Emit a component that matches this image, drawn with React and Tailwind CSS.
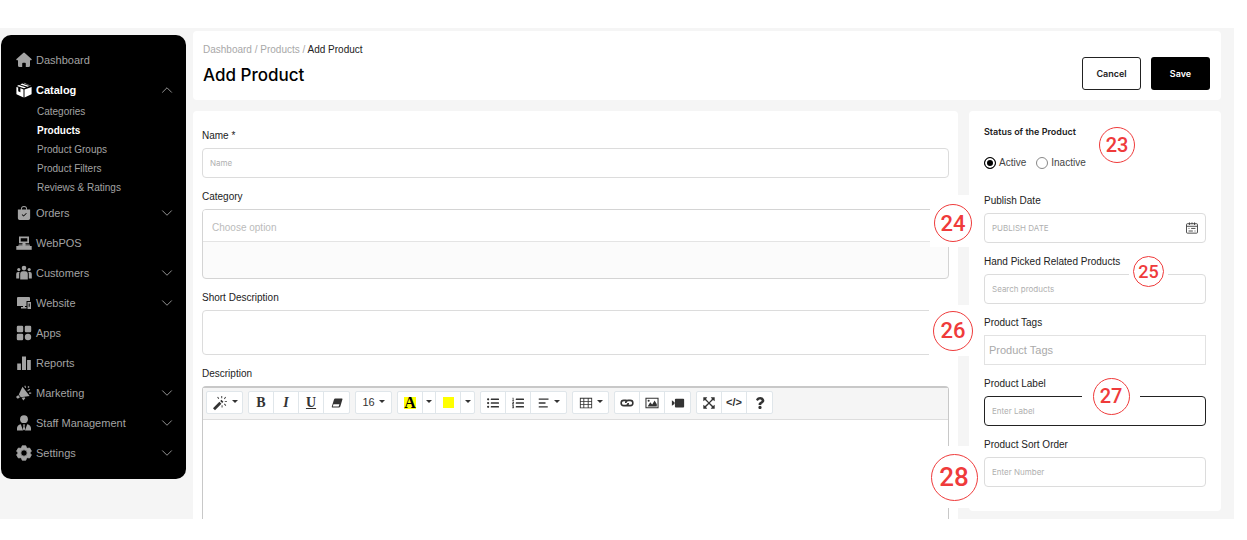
import React, { useState } from 'react';
import { BsBagCheckFill } from 'react-icons/bs';
import { FaListUl, FaListOl, FaQuestion } from 'react-icons/fa';
import { ChevronDown, ChevronUp } from 'lucide-react';

const Svg = ({ children, className = 'size-4', box = '0 0 16 16' }) => (
  <svg className={className} viewBox={box} fill="currentColor" aria-hidden="true">
    {children}
  </svg>
);

const HomeIcon = () => (
  <Svg>
    <path d="M7.200.9a1.200 1.200 0 0 1 1.600 0l6.700 6.200c.5.500.3 1.200-.4 1.200H14v5.200a1.500 1.500 0 0 1-1.500 1.500H9.800v-3.500a.8.8 0 0 0-.8-.8H7a.8.8 0 0 0-.8.8V15H3.500A1.500 1.500 0 0 1 2 13.500V8.300H.9c-.7 0-.9-.7-.4-1.200z" />
  </Svg>
);

const BoxIcon = () => (
  <Svg>
    <path d="M8.500 7.400 15.600 5v6.700c0 .4-.2.700-.6.900l-6.500 2.900zM.4 5l1.800.6v3.600l2.200 1V6.300l3.100 1.100v8.100L1 12.600a1 1 0 0 1-.6-.9zM.9 3.900l2-.9 7.200 2.500L8 6.300zM4.300 2.400l1.800-.8L13.200 4l-1.700.8zM7.500 1 8 .8l7.100 3.100-.5.100z" />
  </Svg>
);

const PosIcon = () => (
  <Svg>
    <path fillRule="evenodd" d="M3 1.500h10v6.700H9.500v1.300h4l.7 1.300h-12l.7-1.300h3.600V8.200H3zM4.700 3.200v3.300h6.600V3.200z" />
    <path d="M.3 11h15.400v3.800H.3z" />
    <path d="M6.500 9.500h3v2h-3z" />
  </Svg>
);

const PeopleIcon = () => (
  <Svg>
    <circle cx="8" cy="3.100" r="2.300" />
    <circle cx="2.800" cy="4.600" r="1.600" />
    <circle cx="13.200" cy="4.600" r="1.600" />
    <path d="M4.200 14.500V9a2.700 2.700 0 0 1 2.700-2.700h2.200A2.700 2.700 0 0 1 11.800 9v5.500zM.2 13.500V8.900A1.900 1.900 0 0 1 2 7h1.700c-.4.600-.5 1.200-.5 2v4.500zM15.800 13.500V8.900A1.900 1.900 0 0 0 14 7h-1.700c.4.600.5 1.200.5 2v4.500z" />
  </Svg>
);

const DevicesIcon = () => (
  <Svg>
    <path d="M2 2h11a1 1 0 0 1 1 1v3h-3.500v5H1V3a1 1 0 0 1 1-1zM5 12h5.500v1.500H5z" />
    <path fillRule="evenodd" d="M11.500 7H15v7h-3.500zM12.700 8.500v3.200h1V8.500z" />
    <path d="M7 10.500h2v2H7z" />
  </Svg>
);

const AppsIcon = () => (
  <Svg>
    <rect x=".8" y=".8" width="6.400" height="6.400" rx="1.200" />
    <rect x="8.800" y=".8" width="6.400" height="6.400" rx="1.200" />
    <rect x=".8" y="8.800" width="6.400" height="6.400" rx="1.200" />
    <circle cx="12" cy="12" r="3.200" />
  </Svg>
);

const BarsIcon = () => (
  <Svg>
    <path d="M1.200 8.500h3.700V15H1.200zM6 1.500h4V15H6zM11.100 5h3.700v10h-3.700z" />
  </Svg>
);

const MegaphoneIcon = () => (
  <Svg>
    <path d="M6.500 1.800 13.600 11 4.800 12.200 2.800 9.600zM2.500 10.200l1.500 2-1.400 1.100a1.300 1.300 0 0 1-1.800-.3l-.2-.2a1.300 1.300 0 0 1 .3-1.800zM5.600 12.700l2.900-.5.800 1.100-2 2.100z" />
    <path d="m8.300 1 .9-.6 1 2-1 .5zM11.500 2.100l1-1 1 1-1 1zM11.400 4.900l2.300-.9.500 1.100-2.300.9zM13 7.500h2.200v1.200H13z" />
  </Svg>
);

const StaffIcon = () => (
  <Svg>
    <circle cx="8" cy="4.200" r="3.900" />
    <path d="M1 15.500v-2.200c0-2.100 1.300-3.500 3.800-4.100l2.200 6.300zM15 15.500v-2.200c0-2.100-1.300-3.500-3.800-4.100L9 15.500zM6.900 9.400h2.200L8.500 11l.7 3.200L8 15.500l-1.200-1.300.7-3.200z" />
  </Svg>
);

const GearIcon = () => (
  <Svg>
    <path
      fillRule="evenodd"
      d="M6.200.8h3.600l.7 1.900 1.100.6 2-.3 1.800 3.100-1.200 1.500v.8l1.200 1.500-1.800 3.100-2-.3-1.100.6-.7 1.900H6.200l-.7-1.900-1.100-.6-2 .3L.6 9.900l1.200-1.500v-.8L.6 6.100 2.400 3l2 .3 1.100-.6zM8 4.800a3.200 3.200 0 1 0 0 6.400 3.200 3.200 0 0 0 0-6.400z"
      stroke="currentColor"
      strokeWidth=".8"
      strokeLinejoin="round"
    />
  </Svg>
);

const WandIcon = () => (
  <Svg>
    <path d="M1 13.200 7.400 6.800l2 2L3 15.200zM8.200 6l1.200-1.200 2 2L10.200 8z" />
    <path d="M5.200 2.200 6 1.700l1.200 1.900-.8.500zM9.300 1h.9v2.200h-.9zM13.200 1.800l.8.500-1.300 1.900-.7-.5zM12.800 5.900H15v.9h-2.200zM12 9.200l.7-.6 1.500 1.700-.7.600zM9.600 10.200h.9v2.200h-.9z" />
  </Svg>
);

const EraserIcon = () => (
  <Svg className="size-3">
    <path fillRule="evenodd" d="M6 2h8.500a.8.800 0 0 1 .8 1l-2.900 9.500A2 2 0 0 1 10.500 14H1.800a.8.800 0 0 1-.8-1l2.900-9.500A2 2 0 0 1 6 2zM3.300 9.500 2.400 12.700h7.800l1-3.200z" />
  </Svg>
);

const AlignIcon = () => (
  <Svg className="size-3">
    <path d="M1 2h13v1.800H1zM1 7.100h9v1.800H1zM1 12.200h12V14H1z" />
  </Svg>
);

const TableIcon = () => (
  <Svg className="size-3.5">
    <path fillRule="evenodd" d="M1 2h14v12H1zM2 3v2.700h3V3zM6 3v2.700h4V3zM11 3v2.700h3V3zM2 6.700v2.600h3V6.700zM6 6.700v2.600h4V6.700zM11 6.700v2.600h3V6.700zM2 10.300V13h3v-2.700zM6 10.300V13h4v-2.700zM11 10.300V13h3v-2.700z" />
  </Svg>
);

const LinkIcon = () => (
  <svg className="size-3.5" viewBox="0 0 16 16" fill="none" stroke="currentColor" strokeWidth="1.800" aria-hidden="true">
    <path d="M7.800 5.200A3 3 0 0 0 6.500 5H4.300a3 3 0 0 0 0 6h2.200a3 3 0 0 0 2.900-3M8.200 10.800a3 3 0 0 0 1.300.2h2.200a3 3 0 0 0 0-6H9.500a3 3 0 0 0-2.900 3" />
  </svg>
);

const PictureIcon = () => (
  <Svg className="size-3.5">
    <path fillRule="evenodd" d="M.5 2h15v12H.5zM1.700 3.200v9.600h12.600V3.200z" />
    <path d="m3 12 3-5 2.200 2.700L11 5l2.500 4.500V12z" />
    <circle cx="4.200" cy="5.400" r="1.200" />
  </Svg>
);

const VideoIcon = () => (
  <Svg className="size-3.5">
    <path d="M5.500 3H14a1 1 0 0 1 1 1v8a1 1 0 0 1-1 1H5.500a1 1 0 0 1-1-1V4a1 1 0 0 1 1-1zM1 4.800 4 7v2l-3 2.200z" />
  </Svg>
);

const ExpandIcon = () => (
  <Svg className="size-3.5">
    <path d="M1.500 1.500H6L4.600 3.500 8 7l3.400-3.500L10 1.500h4.500V6l-1.900-1.400L9 8l3.600 3.400 1.900-1.400v4.500H10l1.400-2L8 9l-3.400 3.500 1.400 2H1.500V10l1.900 1.400L7 8 3.400 4.600 1.500 6z" />
  </Svg>
);

const CalendarIcon = () => (
  <svg className="size-3" viewBox="0 0 14 14" fill="none" stroke="currentColor" aria-hidden="true">
    <rect x=".6" y="2" width="12.800" height="11" rx="1" />
    <path d="M1 5h12M4 .5v3M10 .5v3M7 .5v2" />
    <path d="M6 7.500h5M3 10.500h5M3 7.500h1M10 10.500h1" />
  </svg>
);

const menu = [
  { name: 'Dashboard', icon: <HomeIcon /> },
  {
    name: 'Catalog',
    icon: <BoxIcon />,
    open: true,
    children: ['Categories', 'Products', 'Product Groups', 'Product Filters', 'Reviews & Ratings'],
  },
  { name: 'Orders', icon: <BsBagCheckFill className="size-3.5" />, expandable: true },
  { name: 'WebPOS', icon: <PosIcon /> },
  { name: 'Customers', icon: <PeopleIcon />, expandable: true },
  { name: 'Website', icon: <DevicesIcon />, expandable: true },
  { name: 'Apps', icon: <AppsIcon /> },
  { name: 'Reports', icon: <BarsIcon /> },
  { name: 'Marketing', icon: <MegaphoneIcon />, expandable: true },
  { name: 'Staff Management', icon: <StaffIcon />, expandable: true },
  { name: 'Settings', icon: <GearIcon />, expandable: true },
];

const Sidebar = () => (
  <aside className="mt-[7px] w-[185px] shrink-0 self-start rounded-[10px] bg-black pt-[15px] pb-1.5 text-[#a3a3a3]">
    <nav>
      <ul>
        {menu.map((item) => (
          <li key={item.name} className={item.open ? 'mb-1.5' : 'mb-2.5'}>
            <a
              href="#"
              className={`flex h-5 items-center gap-1 pr-2.5 pl-3.5 text-[11px] ${item.open ? 'font-bold text-white' : ''}`}
            >
              <span className="flex w-[17px] shrink-0 justify-center">{item.icon}</span>
              <span className="flex-1">{item.name}</span>
              {item.open && <ChevronUp className="size-[18px] text-[#a3a3a3]" strokeWidth={1.2} />}
              {item.expandable && <ChevronDown className="size-[18px]" strokeWidth={1.2} />}
            </a>
            {item.children && (
              <ul className="pt-0.5 pl-9 text-[10px]">
                {item.children.map((child) => (
                  <li key={child} className="h-[19px] leading-[19px]">
                    <a href="#" className={child === 'Products' ? 'font-bold text-white' : ''}>
                      {child}
                    </a>
                  </li>
                ))}
              </ul>
            )}
          </li>
        ))}
      </ul>
    </nav>
  </aside>
);

// numbered callout, sits on a white patch that hides whatever is below it
const Callout = ({ number, patch, circle }) => (
  <div className={`absolute flex items-center justify-center bg-white ${patch}`}>
    <span
      className={`flex items-center justify-center rounded-full border border-[#ef3b3b] font-['Roboto',sans-serif] font-medium text-[#ef3b3b] ${circle}`}
    >
      {number}
    </span>
  </div>
);

const Field = ({ id, label, children }) => (
  <div className="relative flex flex-col gap-1">
    <label htmlFor={id} className="text-[10px] leading-4 text-[#222]">
      {label}
    </label>
    {children}
  </div>
);

const inputClass =
  "block h-[30px] w-full rounded border border-[#dcdcdc] bg-white px-[7px] font-['Inter',sans-serif] text-[8px] text-[#222] placeholder:text-[#b0b0b0] placeholder:opacity-100 outline-none";

const Caret = () => (
  <span className="mb-0.5 h-0 w-0 border-x-[3px] border-t-[3px] border-x-transparent border-t-[#333]" />
);

const ToolGroup = ({ children }) => (
  <div className="flex h-[23px] divide-x divide-[#e0e6ea] rounded-xs border border-[#e0e6ea] bg-white">
    {children}
  </div>
);

const Tool = ({ title, width = 'w-[25px]', children }) => (
  <button type="button" title={title} className={`flex items-center justify-center gap-1 ${width}`}>
    {children}
  </button>
);

const Editor = () => (
  <div className="rounded-t border-x border-t-2 border-[#c8c8c8]">
    <div className="flex flex-wrap gap-[5px] border-b border-[#ddd] bg-[#f5f5f5] px-[3px] pt-[3px] pb-[5px] text-[#333]">
      <ToolGroup>
        <Tool title="Style" width="w-[35px]"><WandIcon /><Caret /></Tool>
      </ToolGroup>
      <ToolGroup>
        <Tool title="Bold"><span className="font-['Liberation_Serif',serif] text-sm font-bold">B</span></Tool>
        <Tool title="Italic"><span className="font-['Liberation_Serif',serif] text-sm font-bold italic">I</span></Tool>
        <Tool title="Underline"><span className="font-['Liberation_Serif',serif] text-sm font-bold underline">U</span></Tool>
        <Tool title="Remove font style"><EraserIcon /></Tool>
      </ToolGroup>
      <ToolGroup>
        <Tool title="Font size" width="w-[35px]">
          <span className="text-[11px]">16</span><Caret />
        </Tool>
      </ToolGroup>
      <ToolGroup>
        <Tool title="Text color">
          <span className="bg-[#ff0] font-['Liberation_Serif',serif] text-base leading-3 font-bold text-black">A</span>
        </Tool>
        <Tool title="More text colors" width="w-[13px]"><Caret /></Tool>
        <Tool title="Background color"><span className="size-[11px] bg-[#ff0]" /></Tool>
        <Tool title="More background colors" width="w-[13px]"><Caret /></Tool>
      </ToolGroup>
      <ToolGroup>
        <Tool title="Unordered list"><FaListUl className="size-3" /></Tool>
        <Tool title="Ordered list"><FaListOl className="size-3" /></Tool>
        <Tool title="Paragraph" width="w-[35px]"><AlignIcon /><Caret /></Tool>
      </ToolGroup>
      <ToolGroup>
        <Tool title="Table" width="w-[35px]"><TableIcon /><Caret /></Tool>
      </ToolGroup>
      <ToolGroup>
        <Tool title="Link"><LinkIcon /></Tool>
        <Tool title="Picture"><PictureIcon /></Tool>
        <Tool title="Video"><VideoIcon /></Tool>
      </ToolGroup>
      <ToolGroup>
        <Tool title="Full screen"><ExpandIcon /></Tool>
        <Tool title="Code view"><span className="text-[11px] font-bold">&lt;/&gt;</span></Tool>
        <Tool title="Help"><FaQuestion className="size-3" /></Tool>
      </ToolGroup>
    </div>
    <textarea id="description" className="block h-[99px] w-full resize-none bg-white p-2 text-xs outline-none" />
  </div>
);

const StatusRadio = ({ value, status, onChange }) => (
  <label className="flex items-center gap-[3px] text-[10px] leading-4 text-[#444]">
    <input
      type="radio"
      name="status"
      value={value}
      checked={status === value}
      onChange={() => onChange(value)}
      className="size-3 appearance-none rounded-full border border-[#888] bg-white checked:border-black checked:bg-black checked:inset-ring-2 checked:inset-ring-white"
    />
    {value}
  </label>
);

const App = () => {
  const [status, setStatus] = useState('Active');

  return (
    <div className="overflow-x-hidden bg-white pt-7 pr-[13px] font-['Liberation_Sans',sans-serif]">
      <div className="flex gap-[7px] bg-[#f5f5f5] pl-px">
        <Sidebar />

        <main className="min-w-0 flex-1 pt-[3px] pr-[13px]">
          <header className="flex items-end justify-between rounded bg-white pt-[11px] pr-[11px] pb-2.5 pl-2.5">
            <div className="flex flex-col gap-[5px] pb-[3px]">
              <nav className="text-[10px] leading-4 text-[#a8a8a8]">
                <a href="#">Dashboard</a> / <a href="#">Products</a> /{' '}
                <span className="text-[#222]">Add Product</span>
              </nav>
              <h1 className="font-['Inter',sans-serif] text-[17px] leading-6 font-medium text-black">Add Product</h1>
            </div>
            <div className="flex gap-2.5 font-['Inter',sans-serif] text-[9px] font-semibold">
              <button type="button" className="h-[33px] w-[59px] rounded-[3px] border border-[#222] bg-white text-[#222]">
                Cancel
              </button>
              <button type="button" className="h-[33px] w-[59px] rounded-[3px] bg-black text-white">
                Save
              </button>
            </div>
          </header>

          <form className="mt-[11px] flex items-start gap-[11px]">
            <section className="flex min-w-0 flex-1 flex-col gap-[11px] rounded-t bg-white px-[9px] pt-[17px]">
              <Field id="name" label="Name *">
                <input id="name" type="text" placeholder="Name" className={inputClass} />
              </Field>
              <Field id="category" label="Category">
                <div className="overflow-hidden rounded border border-[#d4d4d4] bg-[#fbfbfb]">
                  <input
                    id="category"
                    type="text"
                    placeholder="Choose option"
                    className="block h-8 w-full border-b border-[#e4e4e4] bg-white px-[9px] pt-1 text-[10px] outline-none placeholder:text-[#bbb]"
                  />
                  <div className="h-9" />
                </div>
              </Field>
              <Field id="short-description" label="Short Description">
                <textarea
                  id="short-description"
                  className="block h-[45px] w-full resize-none rounded border border-[#dcdcdc] bg-white p-2 text-[10px] outline-none"
                />
              </Field>
              <Field id="description" label="Description">
                <Editor />
              </Field>
            </section>

            <section className="flex w-[252px] shrink-0 flex-col gap-[11px] rounded bg-white px-[15px] pt-[13px] pb-6">
              <fieldset className="relative mb-[11px]">
                <legend className="font-['Inter',sans-serif] text-[9px] leading-4 font-semibold text-[#222]">Status of the Product</legend>
                <div className="mt-[15px] flex gap-2.5">
                  <StatusRadio value="Active" status={status} onChange={setStatus} />
                  <StatusRadio value="Inactive" status={status} onChange={setStatus} />
                </div>
                <Callout number="23" patch="left-[115px] -top-[13px]" circle="size-9 text-[20px]" />
              </fieldset>
              <Field id="publish-date" label="Publish Date">
                <div className="relative">
                  <input id="publish-date" type="text" placeholder="PUBLISH DATE" className={inputClass} />
                  <span className="absolute top-[9px] right-2 text-[#333]"><CalendarIcon /></span>
                </div>
                <Callout number="24" patch="-left-[54px] top-[2px] h-[52px] w-[46px] pt-1" circle="size-[38px] text-[22px]" />
              </Field>
              <Field id="related" label="Hand Picked Related Products">
                <input id="related" type="text" placeholder="Search products" className={inputClass} />
                <Callout number="25" patch="left-[145px] top-[1px] h-8 w-[39px]" circle="size-[31px] text-[18px]" />
              </Field>
              <Field id="tags" label="Product Tags">
                <input
                  id="tags"
                  type="text"
                  placeholder="Product Tags"
                  className="block h-[30px] w-full border border-[#e2e2e2] bg-white px-1 text-[11px] outline-none placeholder:text-[#aaa]"
                />
                <Callout number="26" patch="-left-[55px] -top-[10px] h-[51px] w-12" circle="size-10 text-[22px]" />
              </Field>
              <Field id="product-label" label="Product Label">
                <input
                  id="product-label"
                  type="text"
                  placeholder="Enter Label"
                  className="block h-[30px] w-full rounded border border-[#222] bg-white px-[7px] font-['Inter',sans-serif] text-[8px] outline-none placeholder:text-[#b0b0b0]"
                />
                <Callout number="27" patch="left-[98px] top-[1px] h-[38px] w-[58px]" circle="size-[37px] text-[20px]" />
              </Field>
              <Field id="sort-order" label="Product Sort Order">
                <input id="sort-order" type="text" placeholder="Enter Number" className={inputClass} />
                <Callout number="28" patch="-left-[55px] top-[9px] h-[62px] w-[50px]" circle="size-[47px] text-[26px]" />
              </Field>
            </section>
          </form>
        </main>
      </div>
    </div>
  );
};

export default App;
